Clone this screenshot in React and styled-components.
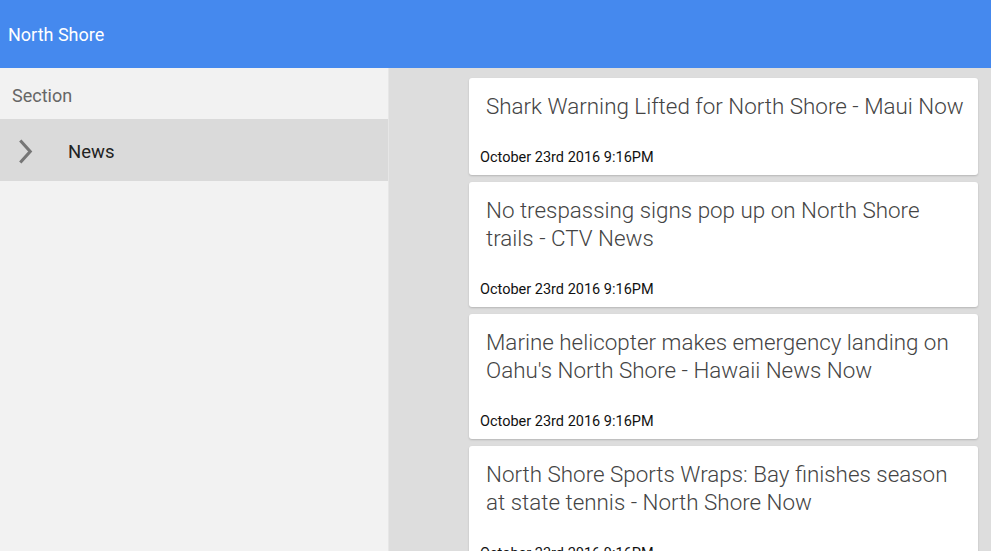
import React from "react";
import styled, { createGlobalStyle } from "styled-components";

const GlobalStyle = createGlobalStyle`
  html, body {
    margin: 0;
    padding: 0;
    height: 100%;
    overflow: hidden;
    font-family: Roboto, "Liberation Sans", sans-serif;
  }
  #root {
    height: 100%;
  }
`;

const stories = [
  "Shark Warning Lifted for North Shore - Maui Now",
  "No trespassing signs pop up on North Shore trails - CTV News",
  "Marine helicopter makes emergency landing on Oahu's North Shore - Hawaii News Now",
  "North Shore Sports Wraps: Bay finishes season at state tennis - North Shore Now",
];

const App = () => {
  return (
    <>
      <GlobalStyle />
      <Page>
        <Header>
          <AppTitle>North Shore</AppTitle>
        </Header>
        <Body>
          <Sidebar>
            <SectionLabel>Section</SectionLabel>
            <NavItem $active>
              <Chevron viewBox="0 0 14 24">
                <path d="M2 1.5 L11.5 12 L2 22.5" />
              </Chevron>
              <NavText>News</NavText>
            </NavItem>
          </Sidebar>
          <Feed>
            {stories.map((title) => (
              <Card key={title}>
                <CardTitle>{title}</CardTitle>
                <CardDate>October 23rd 2016 9:16PM</CardDate>
              </Card>
            ))}
          </Feed>
        </Body>
      </Page>
    </>
  );
};

const Page = styled.div`
  height: 100%;
  display: flex;
  flex-direction: column;
`;

const Header = styled.header`
  height: 68px;
  flex-shrink: 0;
  background: #4589ee;
  display: flex;
  align-items: center;
  padding: 0 8px;
`;

const AppTitle = styled.div`
  color: #ffffff;
  font-size: 18px;
`;

const Body = styled.div`
  flex: 1;
  display: flex;
  min-height: 0;
`;

const Sidebar = styled.nav`
  width: 389px;
  flex-shrink: 0;
  background: #f2f2f2;
  border-right: 1px solid #e6e6e6;
  box-sizing: border-box;
`;

const SectionLabel = styled.div`
  height: 51px;
  box-sizing: border-box;
  padding: 3px 0 0 12px;
  display: flex;
  align-items: center;
  color: #666666;
  font-size: 18px;
`;

const NavItem = styled.div`
  height: 62px;
  box-sizing: border-box;
  padding: 3px 0 0 18px;
  display: flex;
  align-items: center;
  background: ${({ $active }) => ($active ? "#dadada" : "transparent")};
`;

const Chevron = styled.svg`
  width: 15px;
  height: 25px;
  fill: none;
  stroke: #767676;
  stroke-width: 3;
`;

const NavText = styled.span`
  margin-left: 35px;
  font-size: 18.5px;
  color: #222222;
`;

const Feed = styled.main`
  flex: 1;
  background: #dddddd;
  padding: 10px 13px 0 80px;
  display: flex;
  flex-direction: column;
  gap: 7px;
  overflow: hidden;
`;

const Card = styled.article`
  flex-shrink: 0;
  background: #ffffff;
  border-radius: 3px;
  box-shadow: 0 1px 2px rgba(0, 0, 0, 0.18);
  padding: 14px 10px 9px 11px;
`;

const CardTitle = styled.div`
  padding-left: 6px;
  font-size: 22.4px;
  font-weight: 300;
  line-height: 28px;
  color: #444444;
  margin-bottom: 30px;
`;

const CardDate = styled.div`
  font-size: 14.5px;
  line-height: 16px;
  color: #111111;
`;

export default App;
